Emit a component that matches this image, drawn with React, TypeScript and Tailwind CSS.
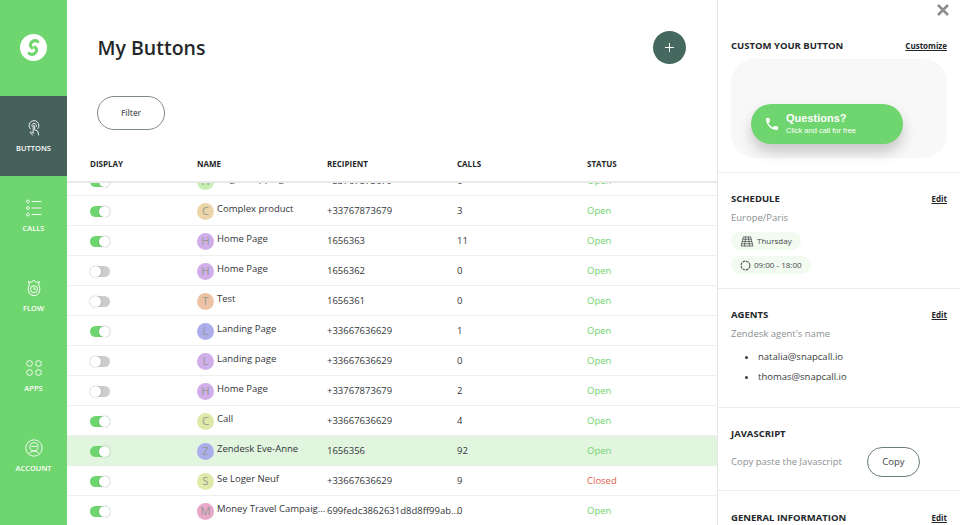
import React from "react";

const font = "font-['Open_Sans',sans-serif]";

type Row = {
  on: boolean;
  letter: string;
  color: string;
  name: string;
  recipient: string;
  calls: string;
  status: string;
  active?: boolean;
};

const rows: Row[] = [
  { on: true, letter: "H", color: "bg-[#c5edb0]", name: "Huge shopping", recipient: "+33767873679", calls: "6", status: "Open" },
  { on: true, letter: "C", color: "bg-[#ecd5a8]", name: "Complex product", recipient: "+33767873679", calls: "3", status: "Open" },
  { on: true, letter: "H", color: "bg-[#d0aeea]", name: "Home Page", recipient: "1656363", calls: "11", status: "Open" },
  { on: false, letter: "H", color: "bg-[#d0aeea]", name: "Home Page", recipient: "1656362", calls: "0", status: "Open" },
  { on: false, letter: "T", color: "bg-[#edc3a6]", name: "Test", recipient: "1656361", calls: "0", status: "Open" },
  { on: true, letter: "L", color: "bg-[#abaeea]", name: "Landing Page", recipient: "+33667636629", calls: "1", status: "Open" },
  { on: false, letter: "L", color: "bg-[#d0aeea]", name: "Landing page", recipient: "+33667636629", calls: "0", status: "Open" },
  { on: false, letter: "H", color: "bg-[#d0aeea]", name: "Home Page", recipient: "+33767873679", calls: "2", status: "Open" },
  { on: true, letter: "C", color: "bg-[#dfeaa8]", name: "Call", recipient: "+33667636629", calls: "4", status: "Open" },
  { on: true, letter: "Z", color: "bg-[#abaeea]", name: "Zendesk Eve-Anne", recipient: "1656356", calls: "92", status: "Open", active: true },
  { on: true, letter: "S", color: "bg-[#dfeaa8]", name: "Se Loger Neuf", recipient: "+33667636629", calls: "9", status: "Closed" },
  { on: true, letter: "M", color: "bg-[#e8a9c9]", name: "Money Travel Campaig...", recipient: "699fedc3862631d8d8ff99ab...", calls: "0", status: "Open" },
];

function Toggle({ on }: { on: boolean }) {
  return (
    <div className={`relative h-[11px] w-5 rounded-full ${on ? "bg-[#6fd56e]" : "bg-[#cccccc]"}`}>
      <div
        className={`absolute top-0 h-[11px] w-[11px] rounded-full bg-white shadow-[0_0_2px_rgba(0,0,0,0.25)] ${on ? "right-0" : "left-0"}`}
      />
    </div>
  );
}

function NavIcon({ name }: { name: string }) {
  const cls = "h-[18px] w-[18px] text-white";
  if (name === "BUTTONS")
    return (
      <svg viewBox="0 0 22 22" className={cls} fill="none" stroke="currentColor" strokeWidth="1.1">
        <path d="M7 12.500a6 6 0 1 1 8.500-.5" />
        <path d="M8.700 9.500a2.800 2.800 0 1 1 5 0" />
        <path d="M9.500 20l-2.800-3c-.7-.9.400-1.900 1.300-1.100l2 1.600V8.800c0-1.200 1.800-1.200 1.800 0v4.700l3 .8c.8.2 1.100.9 1 1.600l1 4.100" />
      </svg>
    );
  if (name === "CALLS")
    return (
      <svg viewBox="0 0 22 22" className={cls} fill="none" stroke="currentColor" strokeWidth="1.100">
        <circle cx="3.500" cy="3" r="1.700" />
        <circle cx="3.500" cy="11" r="1.700" />
        <circle cx="3.500" cy="19" r="1.700" />
        <path d="M8 3h12M8 11h12M8 19h12" />
      </svg>
    );
  if (name === "FLOW")
    return (
      <svg viewBox="0 0 22 22" className={cls} fill="none" stroke="currentColor" strokeWidth="1.200">
        <path d="M5.500 6.500L4 3.200l3.800.8L11 1.500l2.500 2.800 4-1-.8 4c3 4.500 1.500 13-5.700 13S2.500 11.500 5.500 6.500z" />
        <circle cx="11" cy="12.500" r="4.300" />
        <path d="M11 10v2.500h2.300" />
      </svg>
    );
  if (name === "APPS")
    return (
      <svg viewBox="0 0 22 22" className={cls} fill="none" stroke="currentColor" strokeWidth="1.100">
        <circle cx="5.500" cy="5.500" r="3.500" />
        <circle cx="16.500" cy="5.500" r="3.500" />
        <circle cx="5.500" cy="16.500" r="3.500" />
        <circle cx="16.500" cy="16.500" r="3.500" />
      </svg>
    );
  return (
    <svg viewBox="0 0 22 22" className={cls} fill="none" stroke="currentColor" strokeWidth="1.100">
      <circle cx="11" cy="11" r="10" />
      <circle cx="11" cy="9.500" r="5" />
      <path d="M7.500 9h7M4.500 18c1.500-2 3.700-3 6.500-3s5 1 6.500 3" />
    </svg>
  );
}

function Sidebar() {
  const items = ["BUTTONS", "CALLS", "FLOW", "APPS", "ACCOUNT"];
  return (
    <aside className="flex w-[67px] shrink-0 flex-col bg-[#6fd56e]">
      <div className="flex h-24 items-center justify-center">
        <div className="mb-[2px] flex h-[27px] w-[27px] items-center justify-center rounded-full bg-white">
          <svg viewBox="0 0 28 28" className="h-[27px] w-[27px]" fill="none" stroke="#6fd56e" strokeWidth="3.200" strokeLinecap="round">
            <path d="M18.500 7.800c-2.500-1.500-5-1-6.500.800-1.700 2-1.700 4 .5 5.800" />
            <path d="M9.500 20.200c2.500 1.500 5 1 6.500-.8 1.700-2 1.700-4-.5-5.800" />
          </svg>
        </div>
      </div>
      {items.map((item, index) => (
        <div
          key={item}
          className={`flex h-20 flex-col items-center pt-[23px] ${index === 0 ? "bg-[#46605b]" : ""}`}
        >
          <NavIcon name={item} />
          <span className="mt-[5px] text-[7.500px] leading-[12px] font-semibold text-white">{item}</span>
        </div>
      ))}
    </aside>
  );
}

function TableRow({ row }: { row: Row }) {
  return (
    <div
      className={`grid h-[30px] shrink-0 grid-cols-[107px_130px_130px_130px_1fr] items-center border-b pt-[1px] pl-[23px] text-[9.500px] ${
        row.active ? "border-[#e1f5df] bg-[#e1f5df]" : "border-[#efefef]"
      }`}
    >
      <Toggle on={row.on} />
      <div className="flex min-w-0 items-center">
        <div className={`flex h-[17px] w-[17px] shrink-0 items-center justify-center rounded-full text-[11.500px] text-[#949c94] ${row.color}`}>
          {row.letter}
        </div>
        <span className="ml-[3px] -translate-y-[2px] whitespace-nowrap text-[#33363a]">{row.name}</span>
      </div>
      <span className="whitespace-nowrap text-[#33363a]">{row.recipient}</span>
      <span className="text-[#33363a]">{row.calls}</span>
      <span className={row.status === "Closed" ? "text-[#e2604a]" : "text-[#6fd56e]"}>{row.status}</span>
    </div>
  );
}

function SectionHead({ title, action }: { title: string; action: string }) {
  return (
    <div className="flex items-center justify-between">
      <h3 className="text-[9.500px] leading-[14px] font-bold text-[#24272a]">{title}</h3>
      <a className="text-[8px] leading-[14px] font-bold text-[#24272a] underline">{action}</a>
    </div>
  );
}

function Chip({ icon, text }: { icon: React.ReactNode; text: string }) {
  return (
    <div className="flex h-[18px] w-fit items-center gap-[3px] rounded-full bg-[#f1fbf0] px-[9px] text-[8px] text-[#44474a]">
      {icon}
      <span>{text}</span>
    </div>
  );
}

function RightPanel() {
  return (
    <aside className="relative h-full w-[243px] shrink-0 overflow-hidden border-l border-[#e6e6e6] text-[#24272a]">
      <svg viewBox="0 0 12 12" className="absolute top-[4px] right-[11px] h-3 w-3" stroke="#8e8e8e" strokeWidth="2.600">
        <path d="M1 1l10 10M11 1L1 11" />
      </svg>

      <section className="h-[173px] border-b border-[#ececec] pt-[39px] pr-[13px] pl-[13px]">
        <SectionHead title="CUSTOM YOUR BUTTON" action="Customize" />
        <div className="mt-[6px] flex h-[99px] items-end rounded-[24px] bg-[#f8f8f9] pb-[14px] pl-[20px]">
          <div className="flex h-10 w-[152px] items-center rounded-full bg-[#6fd56e] pl-[13px] font-['Liberation_Sans',sans-serif] text-white shadow-[0_8px_14px_rgba(0,0,0,0.2)]">
            <svg viewBox="0 0 24 24" className="h-4 w-4" fill="white">
              <path d="M6.620 10.790c1.440 2.830 3.760 5.140 6.590 6.590l2.200-2.200c.27-.27.67-.36 1.020-.24 1.120.37 2.330.57 3.570.57.55 0 1 .45 1 1V20c0 .55-.45 1-1 1-9.390 0-17-7.610-17-17 0-.55.45-1 1-1h3.500c.55 0 1 .45 1 1 0 1.250.2 2.450.57 3.570.11.35.03.74-.25 1.020l-2.200 2.200z" />
            </svg>
            <div className="ml-[6px]">
              <div className="text-[11px] leading-[13px] font-bold">Questions?</div>
              <div className="text-[7.500px] leading-[11px]">Click and call for free</div>
            </div>
          </div>
        </div>
      </section>

      <section className="h-[116px] border-b border-[#ececec] pt-[19px] pr-[13px] pl-[13px]">
        <SectionHead title="SCHEDULE" action="Edit" />
        <p className="mt-[6px] text-[9.500px] leading-[12px] text-[#8c8f92]">Europe/Paris</p>
        <div className="mt-[8px] flex flex-col gap-[6px]">
          <Chip
            text="Thursday"
            icon={
              <svg viewBox="0 0 14 12" className="h-[11px] w-[14px]" fill="none" stroke="#44474a" strokeWidth="0.800">
                <path d="M3 1h8l2.500 10H.500zM2.200 3.500h9.600M1.600 6h10.800M1 8.500h12M5.500 1l-1.200 10M8.500 1l1.200 10" />
              </svg>
            }
          />
          <Chip
            text="09:00 - 18:00"
            icon={
              <svg viewBox="0 0 12 12" className="h-[11px] w-[11px]" fill="none" stroke="#44474a" strokeWidth="1.100" strokeDasharray="3 0.800">
                <circle cx="6" cy="6" r="4.800" />
              </svg>
            }
          />
        </div>
      </section>

      <section className="h-[119px] border-b border-[#ececec] pt-[19px] pr-[13px] pl-[13px]">
        <SectionHead title="AGENTS" action="Edit" />
        <p className="mt-[6px] text-[9.500px] leading-[12px] text-[#8c8f92]">Zendesk agent's name</p>
        <ul className="mt-[7px] ml-[27px] list-disc text-[9.500px] leading-[20px] text-[#3a3d40]">
          <li>natalia@snapcall.io</li>
          <li>thomas@snapcall.io</li>
        </ul>
      </section>

      <section className="h-[83px] border-b border-[#ececec] pt-[19px] pr-[13px] pl-[13px]">
        <h3 className="text-[9.500px] leading-[14px] font-bold">JAVASCRIPT</h3>
        <div className="mt-[6px] flex items-center">
          <span className="text-[9.500px] text-[#8c8f92]">Copy paste the Javascript</span>
          <button className="mr-[27px] ml-auto h-[30px] w-[53px] rounded-full border border-[#6d7d79] text-[9.500px] font-medium text-[#3f4346]">
            Copy
          </button>
        </div>
      </section>

      <section className="pt-[20px] pr-[13px] pl-[13px]">
        <SectionHead title="GENERAL INFORMATION" action="Edit" />
      </section>
    </aside>
  );
}

export default function App() {
  const columns = ["DISPLAY", "NAME", "RECIPIENT", "CALLS", "STATUS"];
  return (
    <div className={`flex h-[525px] w-[960px] overflow-hidden bg-white ${font}`}>
      <Sidebar />
      <main className="flex min-w-0 flex-1 flex-col">
        <div className="flex h-[96px] shrink-0 items-center justify-between pr-[31px] pl-[30.500px]">
          <h1 className="text-[19.500px] font-semibold text-[#24272a]">My Buttons</h1>
          <div className="mb-[2px] flex h-[33px] w-[33px] items-center justify-center rounded-full bg-[#46695f]">
            <svg viewBox="0 0 9 9" className="h-[9px] w-[9px]" stroke="white" strokeWidth="1">
              <path d="M4.500 0v9M0 4.500h9" />
            </svg>
          </div>
        </div>
        <div className="pl-[30px]">
          <button className="h-[34px] w-[68px] rounded-full border border-[#7f8c89] text-[8px] font-semibold text-[#5a5e61]">
            Filter
          </button>
        </div>
        <div className="mt-[19px] grid h-[34px] shrink-0 grid-cols-[107px_130px_130px_130px_1fr] items-center border-b-2 border-[#e9e9e9] pb-[2px] pl-[23px] text-[8px] font-bold text-[#24272a]">
          {columns.map((c) => (
            <span key={c}>{c}</span>
          ))}
        </div>
        <div className="min-h-0 flex-1 overflow-hidden">
          <div className="-mt-[17px] flex flex-col">
            {rows.map((row, index) => (
              <TableRow key={index} row={row} />
            ))}
          </div>
        </div>
      </main>
      <RightPanel />
    </div>
  );
}
